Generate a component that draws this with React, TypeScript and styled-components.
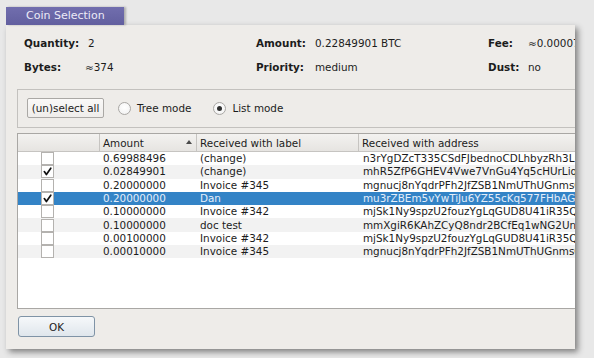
import React from "react";
import styled, { createGlobalStyle } from "styled-components";

const Global = createGlobalStyle`
  html, body { margin: 0; padding: 0; }
  body {
    background: #e8e8e8;
    font-family: "DejaVu Sans", "Liberation Sans", sans-serif;
    width: 594px;
    height: 358px;
    overflow: hidden;
  }
`;

const Page = styled.div`
  padding: 7px 0 0 6px;
  display: flex;
  flex-direction: column;
  align-items: flex-start;
`;

const TitleTab = styled.div`
  width: 118px;
  height: 18px;
  box-sizing: border-box;
  padding-left: 20px;
  background: linear-gradient(#716eae, #625f9f);
  color: #ecebf7;
  font-size: 11px;
  line-height: 18px;
  box-shadow: 2px 0 2px rgba(0, 0, 0, 0.25);
  position: relative;
  z-index: 1;
`;

const Body = styled.div`
  width: 569px;
  height: 324px;
  box-sizing: border-box;
  background: #eeece9;
  box-shadow: 3px 3px 6px rgba(0, 0, 0, 0.45);
  overflow: hidden;
  padding: 6px 0 0 11px;
  display: flex;
  flex-direction: column;
  font-size: 10.4px;
  color: #1c1c1c;
`;

const InfoGrid = styled.div`
  display: grid;
  grid-template-columns: 64px 168px 59px 173px 40px 120px;
  grid-auto-rows: 24px;
  align-items: center;
  padding-left: 7px;
  white-space: nowrap;
`;

const InfoLabel = styled.span`
  font-weight: bold;
`;

const InfoValue = styled.span<{ $shift?: number }>`
  margin-left: ${(p) => p.$shift ?? 0}px;
`;

const Frame = styled.div`
  margin-top: 10px;
  width: 600px;
  height: 39px;
  box-sizing: border-box;
  border: 1px solid #c3c1be;
  display: flex;
  align-items: center;
  padding: 0 0 1px 9px;
`;

const PushButton = styled.button`
  font-family: inherit;
  font-size: 10.4px;
  color: #1c1c1c;
  height: 20px;
  width: 77px;
  padding: 0;
  border: 1px solid #aaa8a5;
  border-radius: 2px;
  background: linear-gradient(#faf9f8, #efedeb);
`;

const RadioLabel = styled.label<{ $gap: number }>`
  display: flex;
  align-items: center;
  margin-left: ${(p) => p.$gap}px;
  gap: 6px;
`;

const RadioCircle = styled.span<{ $checked?: boolean }>`
  width: 13px;
  height: 13px;
  box-sizing: border-box;
  border-radius: 50%;
  border: 1px solid #a9a7a4;
  background: radial-gradient(circle at 50% 40%, #ffffff, #f0f0f0);
  display: flex;
  align-items: center;
  justify-content: center;
  &::after {
    content: "";
    display: ${(p) => (p.$checked ? "block" : "none")};
    width: 5px;
    height: 5px;
    border-radius: 50%;
    background: #303030;
  }
`;

const Table = styled.div`
  margin-top: 5px;
  width: 600px;
  height: 176px;
  box-sizing: border-box;
  border: 1px solid #a9a7a4;
  background: #ffffff;
  display: flex;
  flex-direction: column;
`;

const COLS = "82px 97px 162px 1fr";

const HeaderRow = styled.div`
  display: grid;
  grid-template-columns: ${COLS};
  height: 17px;
  flex-shrink: 0;
  background: linear-gradient(#f3f2f0, #e6e4e1);
  border-bottom: 1px solid #c6c4c1;
`;

const HeaderCell = styled.div`
  position: relative;
  display: flex;
  align-items: center;
  padding-left: 3px;
  border-right: 1px solid #c6c4c1;
  white-space: nowrap;
  overflow: hidden;
`;

const SortArrow = styled.span`
  position: absolute;
  right: 4px;
  top: 6px;
  width: 0;
  height: 0;
  border-left: 3px solid transparent;
  border-right: 3px solid transparent;
  border-bottom: 4px solid #4a4a4a;
`;

const Row = styled.div<{ $alt: boolean; $selected: boolean }>`
  display: grid;
  grid-template-columns: ${COLS};
  height: 13.3px;
  line-height: 13px;
  white-space: nowrap;
  background: ${(p) => (p.$selected ? "#3383c6" : p.$alt ? "#f2f2f2" : "#ffffff")};
  color: ${(p) => (p.$selected ? "#e4eefa" : "#1c1c1c")};
`;

const Cell = styled.div<{ $pad?: number }>`
  padding-left: ${(p) => p.$pad ?? 3}px;
  overflow: hidden;
  display: flex;
  align-items: center;
`;

const CheckBox = styled.span`
  width: 13px;
  height: 13px;
  box-sizing: border-box;
  border: 1px solid #b4b2af;
  background: #ffffff;
  display: flex;
  align-items: center;
  justify-content: center;
`;

const Footer = styled.div`
  margin-top: 7px;
  padding-left: 1px;
`;

const OkButton = styled.button`
  font-family: inherit;
  font-size: 10.4px;
  color: #1c1c1c;
  width: 77px;
  height: 21px;
  padding: 0;
  border: 1px solid #7f93a6;
  border-radius: 3px;
  background: linear-gradient(#f6f8fa, #dfe6ec);
`;

const Check = () => (
  <svg width="9" height="9" viewBox="0 0 9 9">
    <path d="M1.3 4.6 L3.4 7.6 L7.8 1.2" fill="none" stroke="#111" strokeWidth="1.7" strokeLinecap="round" strokeLinejoin="round" />
  </svg>
);

const rows = [
  { checked: false, amount: "0.69988496", label: "(change)", address: "n3rYgDZcT335CSdFJbednoCDLhbyzRh3LiQ" },
  { checked: true, amount: "0.02849901", label: "(change)", address: "mhR5ZfP6GHEV4Vwe7VnGu4Yq5cHUrLiqB" },
  { checked: false, amount: "0.20000000", label: "Invoice #345", address: "mgnucj8nYqdrPFh2JfZSB1NmUThUGnmsGq" },
  { checked: true, amount: "0.20000000", label: "Dan", address: "mu3rZBEm5vYwTiJu6YZ55cKq577FHbAGqd", selected: true },
  { checked: false, amount: "0.10000000", label: "Invoice #342", address: "mjSk1Ny9spzU2fouzYgLqGUD8U41iR35Qs" },
  { checked: false, amount: "0.10000000", label: "doc test", address: "mmXgiR6KAhZCyQ8ndr2BCfEq1wNG2UnyG" },
  { checked: false, amount: "0.00100000", label: "Invoice #342", address: "mjSk1Ny9spzU2fouzYgLqGUD8U41iR35Qs" },
  { checked: false, amount: "0.00010000", label: "Invoice #345", address: "mgnucj8nYqdrPFh2JfZSB1NmUThUGnmsGq" },
];

export default function App() {
  return (
    <>
      <Global />
      <Page>
        <TitleTab>Coin Selection</TitleTab>
        <Body>
          <InfoGrid>
            <InfoLabel>Quantity:</InfoLabel>
            <InfoValue>2</InfoValue>
            <InfoLabel>Amount:</InfoLabel>
            <InfoValue>0.22849901 BTC</InfoValue>
            <InfoLabel>Fee:</InfoLabel>
            <InfoValue>≈0.00007600 BTC</InfoValue>
            <InfoLabel>Bytes:</InfoLabel>
            <InfoValue $shift={-3}>≈374</InfoValue>
            <InfoLabel>Priority:</InfoLabel>
            <InfoValue>medium</InfoValue>
            <InfoLabel>Dust:</InfoLabel>
            <InfoValue>no</InfoValue>
          </InfoGrid>
          <Frame>
            <PushButton>(un)select all</PushButton>
            <RadioLabel $gap={14}>
              <RadioCircle />
              Tree mode
            </RadioLabel>
            <RadioLabel $gap={22}>
              <RadioCircle $checked />
              List mode
            </RadioLabel>
          </Frame>
          <Table>
            <HeaderRow>
              <HeaderCell />
              <HeaderCell>
                Amount
                <SortArrow />
              </HeaderCell>
              <HeaderCell>Received with label</HeaderCell>
              <HeaderCell>Received with address</HeaderCell>
            </HeaderRow>
            {rows.map((r, i) => (
              <Row key={i} $alt={i % 2 === 1} $selected={!!r.selected}>
                <Cell $pad={23}>
                  <CheckBox>{r.checked && <Check />}</CheckBox>
                </Cell>
                <Cell>{r.amount}</Cell>
                <Cell>{r.label}</Cell>
                <Cell $pad={4}>{r.address}</Cell>
              </Row>
            ))}
          </Table>
          <Footer>
            <OkButton>OK</OkButton>
          </Footer>
        </Body>
      </Page>
    </>
  );
}
